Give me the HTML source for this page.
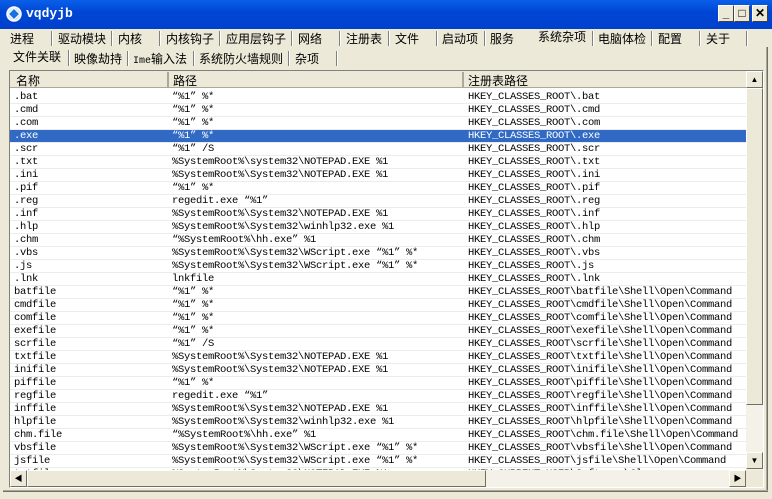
<!DOCTYPE html>
<html><head><meta charset="utf-8"><style>
*{margin:0;padding:0;box-sizing:border-box}
body{width:772px;height:499px;overflow:hidden;background:#ece9d8;position:relative;font-family:"Liberation Sans","Noto Sans CJK SC",sans-serif;font-size:12px;color:#000}
.abs{position:absolute}
#title{left:0;top:0;width:772px;height:29px;background:linear-gradient(#0a5fe8,#0047d6 40%,#0040cc);}
#title .t{left:26px;top:6px;color:#fff;font-family:"Liberation Mono",monospace;font-weight:bold;font-size:13px}
.wb{top:5px;width:16px;height:17px;background:#ece9d8;border:1px solid;border-color:#fff #404040 #404040 #fff;font-weight:bold;text-align:center;line-height:15px;font-size:12px}
.tab{top:30px;font-size:12px;white-space:nowrap}
.sep{width:2px;border-left:1px solid #808080;border-right:1px solid #fff}
.stab{top:50px;font-size:12px;white-space:nowrap}
#list{left:9px;top:70px;width:755px;height:418px;border:1px solid;border-color:#808080 #fff #fff #808080;background:#fff;overflow:hidden}
#hdr{left:0;top:0;width:736px;height:17px;background:#ece9d8;border-bottom:1px solid #aca899}
.h{top:1px;height:15px;border-right:2px solid #aca899}
.row{position:absolute;left:0;width:736px;height:13px;border-bottom:1px solid #ececec;font-family:"Liberation Mono","Noto Sans CJK SC",monospace;font-size:10.5px;line-height:13px;white-space:nowrap;letter-spacing:-0.3px}
.row span{position:absolute;top:0}
.sel{background:#316ac5;color:#fff}
.sb{background:#ece9d8;border:1px solid;border-color:#fff #716f64 #716f64 #fff}
</style></head><body>
<div id="title" class="abs">
 <svg class="abs" style="left:6px;top:6px" width="16" height="16"><circle cx="8" cy="8" r="7" fill="#cfe4ff" stroke="#fff" stroke-width="1.5"/><rect x="4" y="4" width="8" height="8" transform="rotate(45 8 8)" fill="#1b6fe0" stroke="#fff"/></svg>
 <div class="abs t">vqdyjb</div>
</div>
<div class="abs wb" style="left:718px">_</div>
<div class="abs wb" style="left:734px">□</div>
<div class="abs wb" style="left:752px">✕</div>
<div class="abs" style="left:0;top:29px;width:3px;height:470px;background:#ece9d8"></div>

<div class="abs tab" style="left:10px">进程</div><div class="abs sep" style="left:51px;top:31px;height:15px"></div>
<div class="abs tab" style="left:58px">驱动模块</div><div class="abs sep" style="left:111px;top:31px;height:15px"></div>
<div class="abs tab" style="left:118px">内核</div><div class="abs sep" style="left:159px;top:31px;height:15px"></div>
<div class="abs tab" style="left:166px">内核钩子</div><div class="abs sep" style="left:219px;top:31px;height:15px"></div>
<div class="abs tab" style="left:226px">应用层钩子</div><div class="abs sep" style="left:291px;top:31px;height:15px"></div>
<div class="abs tab" style="left:298px">网络</div><div class="abs sep" style="left:339px;top:31px;height:15px"></div>
<div class="abs tab" style="left:346px">注册表</div><div class="abs sep" style="left:388px;top:31px;height:15px"></div>
<div class="abs tab" style="left:395px">文件</div><div class="abs sep" style="left:436px;top:31px;height:15px"></div>
<div class="abs tab" style="left:442px">启动项</div><div class="abs sep" style="left:484px;top:31px;height:15px"></div>
<div class="abs tab" style="left:490px">服务</div>
<div class="abs tab" style="left:538px;top:28px">系统杂项</div><div class="abs sep" style="left:592px;top:31px;height:15px"></div>
<div class="abs tab" style="left:598px">电脑体检</div><div class="abs sep" style="left:651px;top:31px;height:15px"></div>
<div class="abs tab" style="left:658px">配置</div><div class="abs sep" style="left:699px;top:31px;height:15px"></div>
<div class="abs tab" style="left:706px">关于</div><div class="abs sep" style="left:746px;top:31px;height:15px"></div>
<div class="abs" style="left:766px;top:47px;width:2px;height:443px;border-left:1px solid #aca899;border-right:1px solid #716f64"></div>
<div class="abs" style="left:3px;top:490px;width:765px;height:2px;border-top:1px solid #aca899;border-bottom:1px solid #716f64"></div>

<div class="abs stab" style="left:13px;top:48px">文件关联</div><div class="abs sep" style="left:68px;top:50px;height:16px"></div>
<div class="abs stab" style="left:74px">映像劫持</div><div class="abs sep" style="left:127px;top:51px;height:15px"></div>
<div class="abs stab" style="left:133px"><span style="font-family:'Liberation Mono',monospace;font-size:10px">Ime</span>输入法</div><div class="abs sep" style="left:193px;top:51px;height:15px"></div>
<div class="abs stab" style="left:199px">系统防火墙规则</div><div class="abs sep" style="left:288px;top:51px;height:15px"></div>
<div class="abs stab" style="left:295px">杂项</div><div class="abs sep" style="left:336px;top:51px;height:15px"></div>

<div id="list" class="abs">
 <div id="hdr" class="abs">
  <div class="abs h" style="left:0;width:159px;padding-left:6px">名称</div>
  <div class="abs h" style="left:159px;width:295px;padding-left:4px">路径</div>
  <div class="abs h" style="left:454px;width:282px;padding-left:4px;border-right:none">注册表路径</div>
 </div>
 <div id="rows"></div>
 <div class="abs" style="left:736px;top:0;width:17px;height:399px;background:#f3f1e8"></div>
 <div class="abs sb" style="left:736px;top:0;width:17px;height:17px;font-size:8px;text-align:center;line-height:15px">▲</div>
 <div class="abs sb" style="left:736px;top:17px;width:17px;height:317px"></div>
 <div class="abs sb" style="left:736px;top:381px;width:17px;height:17px;font-size:8px;text-align:center;line-height:15px">▼</div>
 <div class="abs" style="left:0;top:399px;width:736px;height:17px;background:#f3f1e8"></div>
 <div class="abs sb" style="left:0;top:399px;width:17px;height:17px;font-size:8px;text-align:center;line-height:15px">◀</div>
 <div class="abs sb" style="left:17px;top:399px;width:459px;height:17px"></div>
 <div class="abs sb" style="left:719px;top:399px;width:17px;height:17px;font-size:8px;text-align:center;line-height:15px">▶</div>
 <div class="abs" style="left:736px;top:399px;width:17px;height:17px;background:#ece9d8"></div>
</div>
<script>
var d=[
[".bat","\u201c%1\u201d %*","HKEY_CLASSES_ROOT\\.bat"],
[".cmd","\u201c%1\u201d %*","HKEY_CLASSES_ROOT\\.cmd"],
[".com","\u201c%1\u201d %*","HKEY_CLASSES_ROOT\\.com"],
[".exe","\u201c%1\u201d %*","HKEY_CLASSES_ROOT\\.exe"],
[".scr","\u201c%1\u201d /S","HKEY_CLASSES_ROOT\\.scr"],
[".txt","%SystemRoot%\\system32\\NOTEPAD.EXE %1","HKEY_CLASSES_ROOT\\.txt"],
[".ini","%SystemRoot%\\System32\\NOTEPAD.EXE %1","HKEY_CLASSES_ROOT\\.ini"],
[".pif","\u201c%1\u201d %*","HKEY_CLASSES_ROOT\\.pif"],
[".reg","regedit.exe \u201c%1\u201d","HKEY_CLASSES_ROOT\\.reg"],
[".inf","%SystemRoot%\\System32\\NOTEPAD.EXE %1","HKEY_CLASSES_ROOT\\.inf"],
[".hlp","%SystemRoot%\\System32\\winhlp32.exe %1","HKEY_CLASSES_ROOT\\.hlp"],
[".chm","\u201c%SystemRoot%\\hh.exe\u201d %1","HKEY_CLASSES_ROOT\\.chm"],
[".vbs","%SystemRoot%\\System32\\WScript.exe \u201c%1\u201d %*","HKEY_CLASSES_ROOT\\.vbs"],
[".js","%SystemRoot%\\System32\\WScript.exe \u201c%1\u201d %*","HKEY_CLASSES_ROOT\\.js"],
[".lnk","lnkfile","HKEY_CLASSES_ROOT\\.lnk"],
["batfile","\u201c%1\u201d %*","HKEY_CLASSES_ROOT\\batfile\\Shell\\Open\\Command"],
["cmdfile","\u201c%1\u201d %*","HKEY_CLASSES_ROOT\\cmdfile\\Shell\\Open\\Command"],
["comfile","\u201c%1\u201d %*","HKEY_CLASSES_ROOT\\comfile\\Shell\\Open\\Command"],
["exefile","\u201c%1\u201d %*","HKEY_CLASSES_ROOT\\exefile\\Shell\\Open\\Command"],
["scrfile","\u201c%1\u201d /S","HKEY_CLASSES_ROOT\\scrfile\\Shell\\Open\\Command"],
["txtfile","%SystemRoot%\\System32\\NOTEPAD.EXE %1","HKEY_CLASSES_ROOT\\txtfile\\Shell\\Open\\Command"],
["inifile","%SystemRoot%\\System32\\NOTEPAD.EXE %1","HKEY_CLASSES_ROOT\\inifile\\Shell\\Open\\Command"],
["piffile","\u201c%1\u201d %*","HKEY_CLASSES_ROOT\\piffile\\Shell\\Open\\Command"],
["regfile","regedit.exe \u201c%1\u201d","HKEY_CLASSES_ROOT\\regfile\\Shell\\Open\\Command"],
["inffile","%SystemRoot%\\System32\\NOTEPAD.EXE %1","HKEY_CLASSES_ROOT\\inffile\\Shell\\Open\\Command"],
["hlpfile","%SystemRoot%\\System32\\winhlp32.exe %1","HKEY_CLASSES_ROOT\\hlpfile\\Shell\\Open\\Command"],
["chm.file","\u201c%SystemRoot%\\hh.exe\u201d %1","HKEY_CLASSES_ROOT\\chm.file\\Shell\\Open\\Command"],
["vbsfile","%SystemRoot%\\System32\\WScript.exe \u201c%1\u201d %*","HKEY_CLASSES_ROOT\\vbsfile\\Shell\\Open\\Command"],
["jsfile","%SystemRoot%\\System32\\WScript.exe \u201c%1\u201d %*","HKEY_CLASSES_ROOT\\jsfile\\Shell\\Open\\Command"],
["txtfile","%SystemRoot%\\System32\\NOTEPAD.EXE %1","HKEY_CURRENT_USER\\Software\\Classes"]];
var h="";
d.forEach(function(r,i){h+='<div class="row'+(i==3?' sel':'')+'" style="top:'+(20+i*13)+'px"><span style="left:4px">'+r[0]+'</span><span style="left:162px">'+r[1]+'</span><span style="left:458px">'+r[2]+'</span></div>';});
document.getElementById("rows").innerHTML=h;
</script>
</body></html>
